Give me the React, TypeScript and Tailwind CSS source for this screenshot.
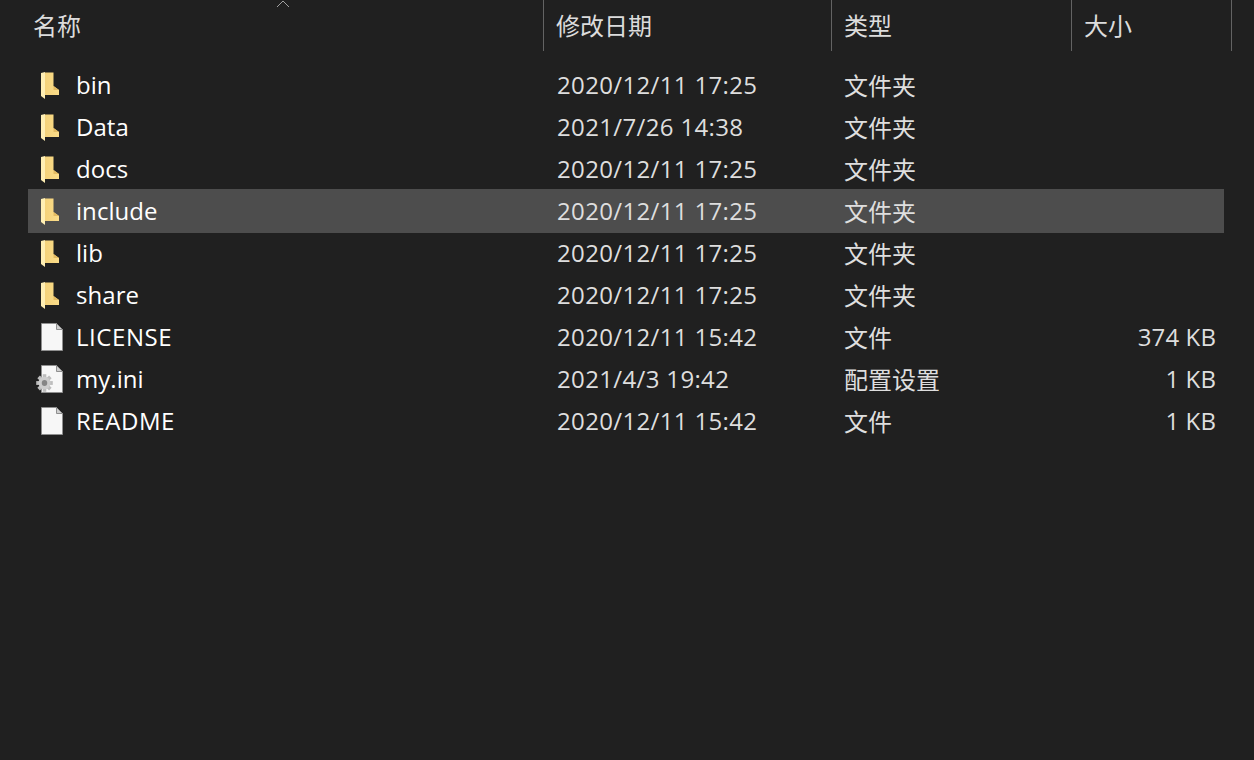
const cjk = "font-['Noto_Sans_CJK_SC','Noto_Sans_CJK_JP',sans-serif]";

function Folder() {
  return (
    <svg width="18" height="27" viewBox="0 0 18 27" className="block">
      <defs>
        <linearGradient id="fb" x1="0" y1="0" x2="1" y2="0">
          <stop offset="0" stopColor="#f4d27a" />
          <stop offset="1" stopColor="#fbdd8a" />
        </linearGradient>
      </defs>
      <path d="M4 0.5 H12.5 V14 L18 18 V23 H4 Z" fill="url(#fb)" />
      <path d="M0 1 L4 0 V27 L0 24 Z" fill="#ffefb4" />
      <path d="M12.5 14 L18 18 H12.5 Z" fill="#e3bb62" />
    </svg>
  );
}

function FileDoc() {
  return (
    <svg width="22" height="28" viewBox="0 0 22 28" className="block">
      <path d="M0.5 0.5 H15.5 L21.5 6.5 V27.5 H0.5 Z" fill="#f7f7f7" stroke="#8f8f8f" strokeWidth="1" />
      <path d="M15.5 0.5 V6.5 H21.5 Z" fill="#cfcfcf" stroke="#8f8f8f" strokeWidth="1" />
    </svg>
  );
}

function Gear() {
  const teeth = [0, 45, 90, 135, 180, 225, 270, 315];
  return (
    <svg width="17" height="18" viewBox="0 0 16 16" className="block" preserveAspectRatio="none">
      {teeth.map((a) => (
        <rect key={a} x="6.3" y="0.2" width="3.4" height="4" fill="#bdbdbd" transform={`rotate(${a} 8 8)`} />
      ))}
      <circle cx="8" cy="8" r="5.6" fill="#cdcdcd" />
      <circle cx="8" cy="8" r="2.6" fill="#858585" />
    </svg>
  );
}

type Row = {
  name: string;
  date: string;
  type: string;
  size?: string;
  icon: "folder" | "file" | "ini";
  sel?: boolean;
  caps?: boolean;
};

const rows: Row[] = [
  { name: "bin", date: "2020/12/11 17:25", type: "文件夹", icon: "folder" },
  { name: "Data", date: "2021/7/26 14:38", type: "文件夹", icon: "folder" },
  { name: "docs", date: "2020/12/11 17:25", type: "文件夹", icon: "folder" },
  { name: "include", date: "2020/12/11 17:25", type: "文件夹", icon: "folder", sel: true },
  { name: "lib", date: "2020/12/11 17:25", type: "文件夹", icon: "folder" },
  { name: "share", date: "2020/12/11 17:25", type: "文件夹", icon: "folder" },
  { name: "LICENSE", date: "2020/12/11 15:42", type: "文件", size: "374 KB", icon: "file", caps: true },
  { name: "my.ini", date: "2021/4/3 19:42", type: "配置设置", size: "1 KB", icon: "ini" },
  { name: "README", date: "2020/12/11 15:42", type: "文件", size: "1 KB", icon: "file", caps: true },
];

function Head({ label, width }: { label: string; width: string }) {
  return (
    <div className={`${width} h-[51px] border-r border-[#636363] flex items-center pl-3 pb-[1px]`}>
      <span className={`${cjk} text-[24px] leading-none text-[#dcdcdc]`}>{label}</span>
    </div>
  );
}

export default function App() {
  return (
    <div className="relative w-[1254px] h-[760px] overflow-hidden bg-[#202020] font-['Open_Sans',sans-serif]">
      <div className="flex pl-[22px]">
        <div className="relative w-[522px] h-[51px] border-r border-[#636363] flex items-center pl-[11px] pb-[1px]">
          <span className={`${cjk} text-[24px] leading-none text-[#dcdcdc]`}>名称</span>
          <svg width="14" height="8" viewBox="0 0 14 8" className="absolute left-[254px] top-0">
            <path d="M1 7 L7 1 L13 7" fill="none" stroke="#a0a0a0" strokeWidth="1" />
          </svg>
        </div>
        <Head label="修改日期" width="w-[288px]" />
        <Head label="类型" width="w-[240px]" />
        <Head label="大小" width="w-[160px]" />
      </div>

      <div className="pt-[12px] pl-[28px] w-[1224px] flex flex-col">
        {rows.map((r) => (
          <div
            key={r.name}
            className={`flex items-center h-[44px] -my-px first:mt-0 ${r.sel ? "bg-[#4d4d4d]" : ""}`}
          >
            <div className="relative w-[48px] pl-[13px] flex items-center">
              {r.icon === "folder" ? <Folder /> : <FileDoc />}
              {r.icon === "ini" && (
                <div className="absolute left-[8px] top-[9px]">
                  <Gear />
                </div>
              )}
            </div>
            <div className={`w-[481px] text-[24px] leading-none text-white ${r.caps ? "tracking-[0.55px]" : "tracking-[0.05px]"}`}>
              {r.name}
            </div>
            <div className="w-[287px] text-[24px] leading-none text-[#dedede] tracking-[0.35px]">{r.date}</div>
            <div className={`w-[180px] ${cjk} text-[24px] leading-none text-[#dedede]`}>{r.type}</div>
            <div className="flex-1 pr-2 text-right text-[24px] leading-none text-[#dedede] tracking-[0.1px]">
              {r.size}
            </div>
          </div>
        ))}
      </div>
    </div>
  );
}
